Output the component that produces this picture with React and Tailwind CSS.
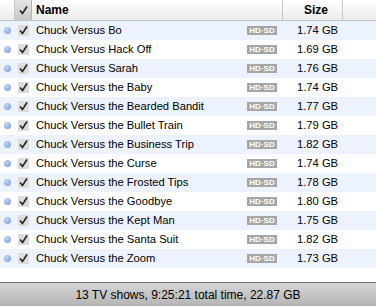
const shows = [
  ["Chuck Versus Bo", "1.74 GB"],
  ["Chuck Versus Hack Off", "1.69 GB"],
  ["Chuck Versus Sarah", "1.76 GB"],
  ["Chuck Versus the Baby", "1.74 GB"],
  ["Chuck Versus the Bearded Bandit", "1.77 GB"],
  ["Chuck Versus the Bullet Train", "1.79 GB"],
  ["Chuck Versus the Business Trip", "1.82 GB"],
  ["Chuck Versus the Curse", "1.74 GB"],
  ["Chuck Versus the Frosted Tips", "1.78 GB"],
  ["Chuck Versus the Goodbye", "1.80 GB"],
  ["Chuck Versus the Kept Man", "1.75 GB"],
  ["Chuck Versus the Santa Suit", "1.82 GB"],
  ["Chuck Versus the Zoom", "1.73 GB"]
]

function Check() {
  return (
    <svg width="9" height="9" viewBox="0 0 9 9">
      <path d="M1 4.5 L3.5 7.5 L8 0.5" fill="none" stroke="#222" strokeWidth="1.6" />
    </svg>
  )
}

function Row({ name, size, odd }) {
  return (
    <div className={`flex items-center h-[19px] ${odd ? "bg-[#edf3fe]" : "bg-white"}`}>
      <div className="w-[15px] flex justify-center">
        <div className="w-[7px] h-[7px] rounded-full bg-[radial-gradient(circle_at_40%_35%,#c4d6f2,#6f95d4)]" />
      </div>
      <div className="w-[17px] flex justify-center">
        <div className="w-[11px] h-[11px] bg-[#dcdcdc] rounded-[1px] flex items-center justify-center">
          <Check />
        </div>
      </div>
      <div className="pl-[4px] w-[215px] text-[11.2px] text-black truncate">{name}</div>
      <div className="w-[30px] h-[9px] bg-[#a6a6a6] text-white text-[8px] font-bold leading-[9px] text-center">
        HD·SD
      </div>
      <div className="pl-[20px] text-[11.2px] text-black">{size}</div>
    </div>
  )
}

export default function App() {
  return (
    <div className="w-[376px] h-[306px] flex flex-col bg-white overflow-hidden" style={{ fontFamily: '"Lucida Grande", "Liberation Sans", sans-serif' }}>
      <div className="flex h-[21px] border-b border-[#c0c0c0] bg-[linear-gradient(#ffffff,#ececec)] text-[12px] font-bold">
        <div className="w-[15px] border-r border-[#c8c8c8]" />
        <div className="w-[17px] border-r border-[#b4b4b4] bg-[linear-gradient(#e4e4e4,#c9c9c9)] flex items-center justify-center">
          <Check />
        </div>
        <div className="w-[251px] border-r border-[#c8c8c8] pl-[4px] flex items-center">Name</div>
        <div className="w-[60px] border-r border-[#c8c8c8] pr-[14px] flex items-center justify-end">Size</div>
        <div className="flex-1" />
      </div>
      <div className="flex-1">
        {shows.map(([name, size], i) => (
          <Row key={name} name={name} size={size} odd={i % 2 === 0} />
        ))}
      </div>
      <div className="h-[24px] border-t border-[#6e6e6e] bg-[linear-gradient(#d6d6d6,#b4b4b4)] flex items-center justify-center text-[12px] text-black">
        13 TV shows, 9:25:21 total time, 22.87 GB
      </div>
    </div>
  )
}
